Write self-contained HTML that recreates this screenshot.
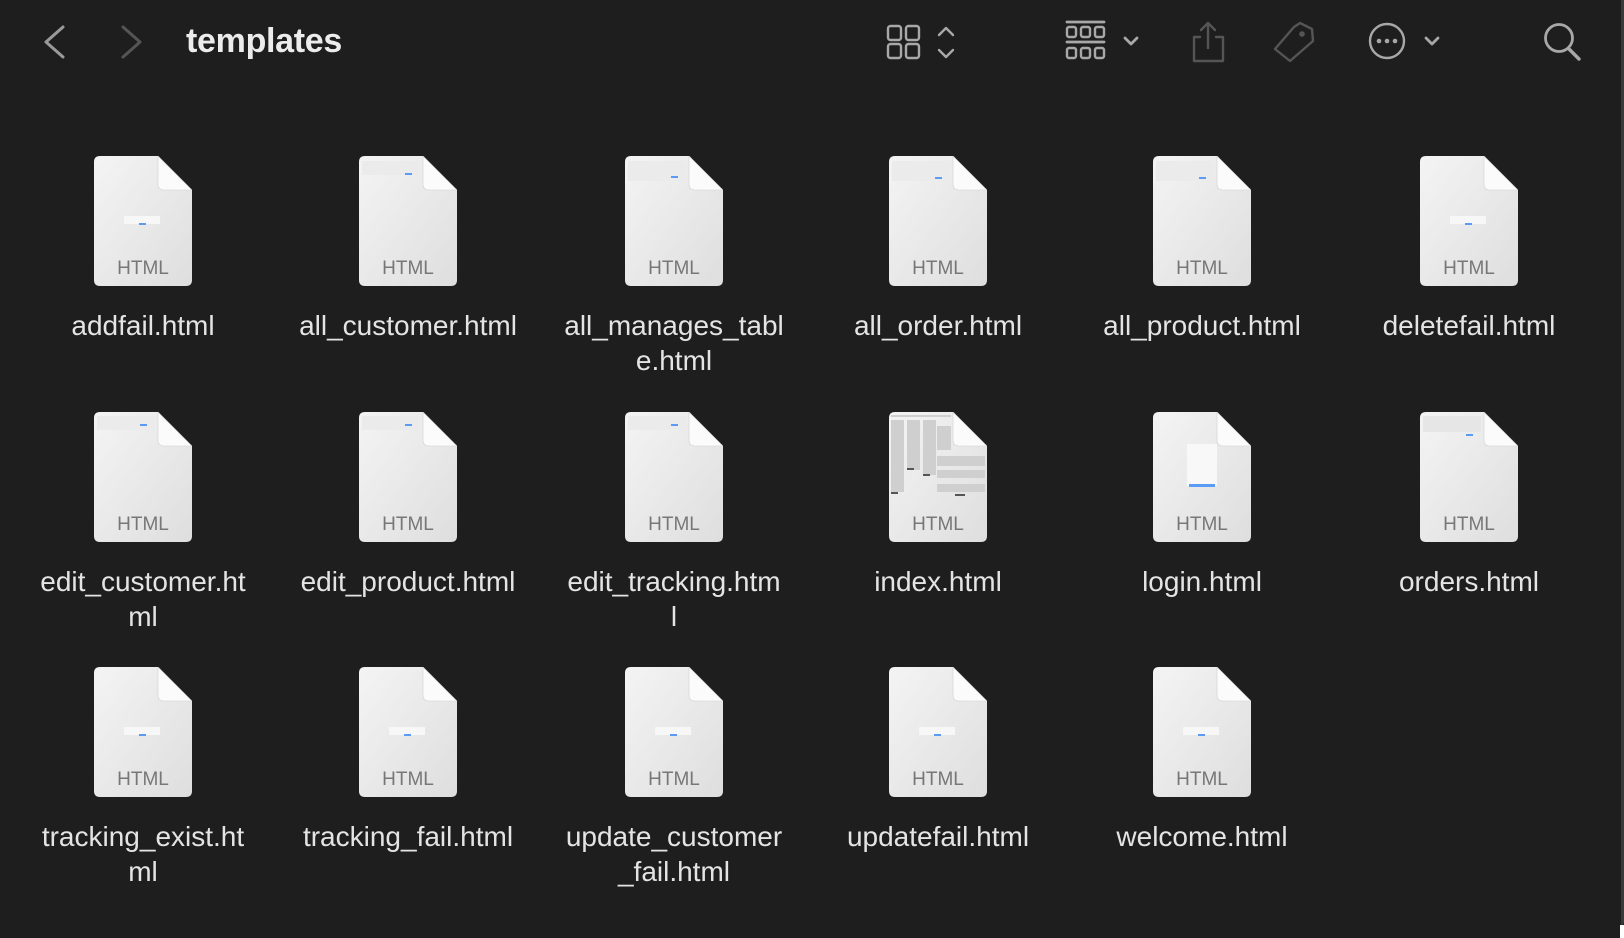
<!DOCTYPE html>
<html><head><meta charset="utf-8"><style>
html,body{margin:0;padding:0;}
body{width:1624px;height:938px;background:#1e1e1e;position:relative;overflow:hidden;font-family:"Liberation Sans",sans-serif;}
.edge{position:absolute;right:0;top:0;width:3px;height:925px;background:#3a3a3a;border-bottom-right-radius:12px;}
.corner{position:absolute;right:0;bottom:0;width:4px;height:13px;background:#fff;}
.title{position:absolute;left:186px;top:22px;font-size:34px;font-weight:bold;color:#ececec;letter-spacing:-0.3px;}
.item{position:absolute;width:260px;text-align:center;}
.item svg{display:block;margin:0 auto;}
.lbl{margin:22px auto 0;width:222px;font-size:28px;line-height:35px;color:#e4e4e4;word-break:break-all;}
</style></head><body>
<div class="edge"></div><div class="corner"></div>
<svg width="1624" height="90" style="position:absolute;left:0;top:0" fill="none" stroke-linecap="round" stroke-linejoin="round">
<path d="M63 27 L46 42 L63 57" stroke="#9a9a9a" stroke-width="3"/>
<path d="M123 27 L140 42 L123 57" stroke="#555" stroke-width="3"/>
<g stroke="#a8a8a8" stroke-width="2.4">
<rect x="888" y="26" width="13" height="14" rx="2.5"/><rect x="906" y="26" width="13" height="14" rx="2.5"/>
<rect x="888" y="44" width="13" height="14" rx="2.5"/><rect x="906" y="44" width="13" height="14" rx="2.5"/>
<path d="M939 35 L946 28 L953 35 M939 50 L946 57 L953 50"/>
<path d="M1067 22 H1104 M1067 42 H1104" stroke-width="2.8"/>
<rect x="1067" y="27" width="9" height="10" rx="2"/><rect x="1081" y="27" width="9" height="10" rx="2"/><rect x="1095" y="27" width="9" height="10" rx="2"/>
<rect x="1067" y="48" width="9" height="10" rx="2"/><rect x="1081" y="48" width="9" height="10" rx="2"/><rect x="1095" y="48" width="9" height="10" rx="2"/>
<path d="M1125 38 L1131 44 L1137 38" stroke-width="2.8"/>
<circle cx="1387" cy="41" r="17"/>
<path d="M1426 38 L1432 44 L1438 38" stroke-width="2.8"/>
<circle cx="1559" cy="38" r="13.5" stroke-width="2.8"/><path d="M1569 49 L1579 59" stroke-width="3.4"/>
</g>
<g fill="#a8a8a8"><circle cx="1379" cy="41" r="2.3"/><circle cx="1387" cy="41" r="2.3"/><circle cx="1395" cy="41" r="2.3"/></g>
<g stroke="#555" stroke-width="2.4">
<path d="M1200 37 H1194 V61 H1223 V37 H1216 M1208 48 V23 M1201 30 L1208 23 L1215 30"/>
<path d="M1300 23 L1312 29 L1313 41 L1290 61 L1275 49 L1294 27 Z"/><circle cx="1302" cy="34" r="1.6" fill="#555"/>
</g>
</svg>
<div class="title">templates</div>
<svg width="0" height="0" style="position:absolute">
<defs>
<linearGradient id="g" x1="0" y1="0" x2="1" y2="1"><stop offset="0" stop-color="#f4f4f4"/><stop offset="1" stop-color="#dedede"/></linearGradient>
<symbol id="doc" viewBox="0 0 98 130">
<path d="M6 0 H64 L98 34 V124 Q98 130 92 130 H6 Q0 130 0 124 V6 Q0 0 6 0Z" fill="url(#g)"/>
<path d="M64 0 V28 Q64 34 70 34 H98 Z" fill="#fbfbfb" stroke="#cfcfcf" stroke-width="0.6"/>
</symbol>
</defs></svg>
<!-- row 1 -->
<div class="item" style="left:13px;top:156px"><svg width="98" height="130"><use href="#doc"/><rect x="30" y="60" width="36" height="8" fill="#f7f7f7"/><rect x="45" y="67" width="7" height="2" fill="#5a9cf5"/><text x="49" y="118" text-anchor="middle" font-family="Liberation Sans" font-size="19" fill="#777">HTML</text></svg><div class="lbl">addfail.html</div></div>
<div class="item" style="left:278px;top:156px"><svg width="98" height="130"><use href="#doc"/><rect x="3" y="5" width="58" height="14" fill="#ebebeb"/><rect x="46" y="17" width="7" height="2" fill="#5a9cf5"/><text x="49" y="118" text-anchor="middle" font-family="Liberation Sans" font-size="19" fill="#777">HTML</text></svg><div class="lbl">all_customer.html</div></div>
<div class="item" style="left:544px;top:156px"><svg width="98" height="130"><use href="#doc"/><rect x="3" y="5" width="58" height="20" fill="#ebebeb"/><rect x="46" y="20" width="7" height="2" fill="#5a9cf5"/><text x="49" y="118" text-anchor="middle" font-family="Liberation Sans" font-size="19" fill="#777">HTML</text></svg><div class="lbl">all_manages_table.html</div></div>
<div class="item" style="left:808px;top:156px"><svg width="98" height="130"><use href="#doc"/><rect x="3" y="5" width="58" height="20" fill="#ebebeb"/><rect x="46" y="21" width="7" height="2" fill="#5a9cf5"/><text x="49" y="118" text-anchor="middle" font-family="Liberation Sans" font-size="19" fill="#777">HTML</text></svg><div class="lbl">all_order.html</div></div>
<div class="item" style="left:1072px;top:156px"><svg width="98" height="130"><use href="#doc"/><rect x="3" y="5" width="58" height="20" fill="#ebebeb"/><rect x="46" y="21" width="7" height="2" fill="#5a9cf5"/><text x="49" y="118" text-anchor="middle" font-family="Liberation Sans" font-size="19" fill="#777">HTML</text></svg><div class="lbl">all_product.html</div></div>
<div class="item" style="left:1339px;top:156px"><svg width="98" height="130"><use href="#doc"/><rect x="30" y="60" width="36" height="8" fill="#f7f7f7"/><rect x="45" y="67" width="7" height="2" fill="#5a9cf5"/><text x="49" y="118" text-anchor="middle" font-family="Liberation Sans" font-size="19" fill="#777">HTML</text></svg><div class="lbl">deletefail.html</div></div>
<!-- row 2 -->
<div class="item" style="left:13px;top:412px"><svg width="98" height="130"><use href="#doc"/><rect x="3" y="4" width="58" height="14" fill="#ebebeb"/><rect x="46" y="12" width="7" height="2" fill="#5a9cf5"/><text x="49" y="118" text-anchor="middle" font-family="Liberation Sans" font-size="19" fill="#777">HTML</text></svg><div class="lbl">edit_customer.html</div></div>
<div class="item" style="left:278px;top:412px"><svg width="98" height="130"><use href="#doc"/><rect x="3" y="4" width="58" height="14" fill="#ebebeb"/><rect x="46" y="12" width="7" height="2" fill="#5a9cf5"/><text x="49" y="118" text-anchor="middle" font-family="Liberation Sans" font-size="19" fill="#777">HTML</text></svg><div class="lbl">edit_product.html</div></div>
<div class="item" style="left:544px;top:412px"><svg width="98" height="130"><use href="#doc"/><rect x="3" y="4" width="58" height="14" fill="#ebebeb"/><rect x="46" y="12" width="7" height="2" fill="#5a9cf5"/><text x="49" y="118" text-anchor="middle" font-family="Liberation Sans" font-size="19" fill="#777">HTML</text></svg><div class="lbl">edit_tracking.htm<br>l</div></div>
<div class="item" style="left:808px;top:412px"><svg width="98" height="130"><use href="#doc"/><g fill="#cfcfcf"><rect x="2" y="3" width="60" height="2"/><rect x="2" y="8" width="13" height="72"/><rect x="18" y="8" width="13" height="50"/><rect x="34" y="8" width="13" height="55"/><rect x="48" y="14" width="14" height="24"/><rect x="48" y="44" width="48" height="10"/><rect x="48" y="58" width="48" height="8"/><rect x="48" y="72" width="48" height="8"/></g><g fill="#555"><rect x="2" y="80" width="7" height="2"/><rect x="18" y="56" width="7" height="2"/><rect x="34" y="62" width="7" height="2"/><rect x="66" y="82" width="10" height="2"/></g><text x="49" y="118" text-anchor="middle" font-family="Liberation Sans" font-size="19" fill="#777">HTML</text></svg><div class="lbl">index.html</div></div>
<div class="item" style="left:1072px;top:412px"><svg width="98" height="130"><use href="#doc"/><rect x="34" y="32" width="30" height="42" fill="#f8f8f8"/><rect x="36" y="72" width="26" height="3" fill="#5a9cf5"/><text x="49" y="118" text-anchor="middle" font-family="Liberation Sans" font-size="19" fill="#777">HTML</text></svg><div class="lbl">login.html</div></div>
<div class="item" style="left:1339px;top:412px"><svg width="98" height="130"><use href="#doc"/><rect x="3" y="4" width="58" height="16" fill="#e6e6e6"/><rect x="46" y="22" width="7" height="2" fill="#5a9cf5"/><text x="49" y="118" text-anchor="middle" font-family="Liberation Sans" font-size="19" fill="#777">HTML</text></svg><div class="lbl">orders.html</div></div>
<!-- row 3 -->
<div class="item" style="left:13px;top:667px"><svg width="98" height="130"><use href="#doc"/><rect x="30" y="60" width="36" height="8" fill="#f7f7f7"/><rect x="45" y="67" width="7" height="2" fill="#5a9cf5"/><text x="49" y="118" text-anchor="middle" font-family="Liberation Sans" font-size="19" fill="#777">HTML</text></svg><div class="lbl">tracking_exist.html</div></div>
<div class="item" style="left:278px;top:667px"><svg width="98" height="130"><use href="#doc"/><rect x="30" y="60" width="36" height="8" fill="#f7f7f7"/><rect x="45" y="67" width="7" height="2" fill="#5a9cf5"/><text x="49" y="118" text-anchor="middle" font-family="Liberation Sans" font-size="19" fill="#777">HTML</text></svg><div class="lbl">tracking_fail.html</div></div>
<div class="item" style="left:544px;top:667px"><svg width="98" height="130"><use href="#doc"/><rect x="30" y="60" width="36" height="8" fill="#f7f7f7"/><rect x="45" y="67" width="7" height="2" fill="#5a9cf5"/><text x="49" y="118" text-anchor="middle" font-family="Liberation Sans" font-size="19" fill="#777">HTML</text></svg><div class="lbl">update_customer_fail.html</div></div>
<div class="item" style="left:808px;top:667px"><svg width="98" height="130"><use href="#doc"/><rect x="30" y="60" width="36" height="8" fill="#f7f7f7"/><rect x="45" y="67" width="7" height="2" fill="#5a9cf5"/><text x="49" y="118" text-anchor="middle" font-family="Liberation Sans" font-size="19" fill="#777">HTML</text></svg><div class="lbl">updatefail.html</div></div>
<div class="item" style="left:1072px;top:667px"><svg width="98" height="130"><use href="#doc"/><rect x="30" y="60" width="36" height="8" fill="#f7f7f7"/><rect x="45" y="67" width="7" height="2" fill="#5a9cf5"/><text x="49" y="118" text-anchor="middle" font-family="Liberation Sans" font-size="19" fill="#777">HTML</text></svg><div class="lbl">welcome.html</div></div>
</body></html>
